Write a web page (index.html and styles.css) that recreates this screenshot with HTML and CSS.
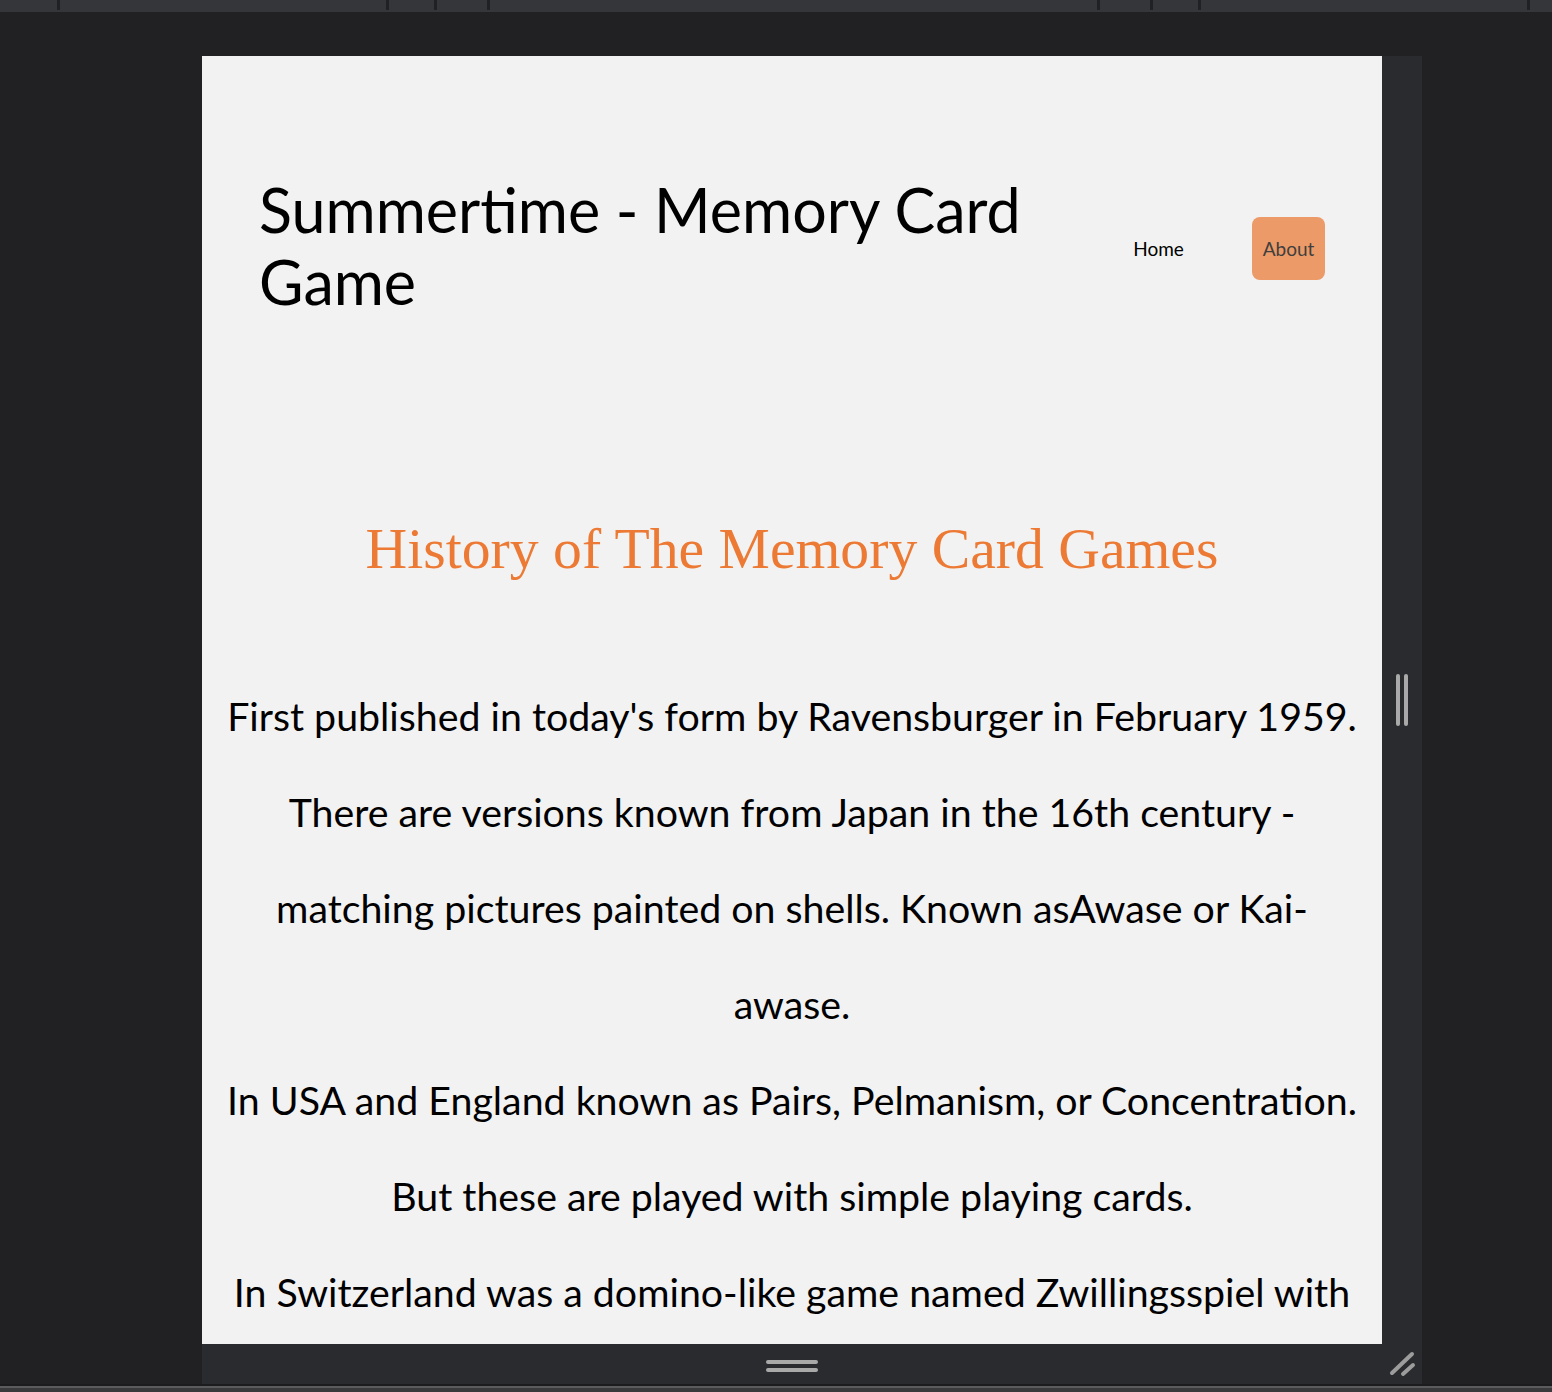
FILE: index.html
```html
<!DOCTYPE html>
<html lang="en">
<head>
<meta charset="utf-8">
<title>Summertime - Memory Card Game</title>
<link rel="stylesheet" href="styles.css">
</head>
<body>
<div class="topbar">
  <div class="tab tab-a"></div>
  <div class="tab tab-b sep"></div>
  <div class="tab tab-c sep"></div>
  <div class="tab tab-d sep"></div>
  <div class="tab tab-e sep"></div>
  <div class="tab tab-d sep"></div>
  <div class="tab tab-c sep"></div>
  <div class="tab tab-b sep"></div>
  <div class="tab tab-f sep"></div>
</div>
<div class="stage">
  <div class="frame">
    <div class="preview">
      <header class="site-header">
        <h1 class="site-title">Summertime - Memory Card Game</h1>
        <nav class="nav">
          <a class="nav-link" href="#">Home</a>
          <a class="nav-link nav-active" href="#">About</a>
        </nav>
      </header>
      <main class="content">
        <h2 class="history-title">History of The Memory Card Games</h2>
        <p class="text">First published in today's form by Ravensburger in February 1959.</p>
        <p class="text">There are versions known from Japan in the 16th century -<br>matching pictures painted on shells. Known asAwase or Kai-<br>awase.</p>
        <p class="text">In USA and England known as Pairs, Pelmanism, or Concentration.</p>
        <p class="text">But these are played with simple playing cards.</p>
        <p class="text">In Switzerland was a domino-like game named Zwillingsspiel with</p>
      </main>
    </div>
    <div class="side-handle">
      <span class="vbar"></span><span class="vbar"></span>
    </div>
    <div class="bottom-handle">
      <span class="hbar"></span><span class="hbar"></span>
    </div>
    <div class="corner">
      <svg width="40" height="40" viewBox="0 0 40 40">
        <path d="M10 29 L30 10 M21 30 L31 21" stroke="#9c9c9c" stroke-width="4" stroke-linecap="round" fill="none"/>
      </svg>
    </div>
  </div>
</div>
<div class="bottom-strip"></div>
</body>
</html>
```
FILE: styles.css
```css
html, body {
  margin: 0;
  padding: 0;
}
body {
  background: #212123;
  width: 1552px;
  height: 1392px;
  overflow: hidden;
}
.topbar {
  height: 12px;
  background: #35363a;
  display: flex;
}
.tab {
  height: 10px;
  box-sizing: border-box;
  flex: none;
}
.sep {
  border-left: 3px solid #202124;
}
.tab-a { width: 57px; }
.tab-b { width: 329px; }
.tab-c { width: 48px; }
.tab-d { width: 53px; }
.tab-e { width: 610px; }
.tab-f { width: 25px; }

.stage {
  height: 1372px;
  padding: 44px 0 0 202px;
  box-sizing: border-box;
}
.frame {
  width: 1220px;
  height: 1328px;
  display: grid;
  grid-template-columns: 1180px 40px;
  grid-template-rows: 1288px 40px;
  background: #2a2b2f;
}
.preview {
  background: #f2f2f2;
  overflow: hidden;
  color: #000;
  font-family: Lato, "Liberation Sans", sans-serif;
}
.site-header {
  display: flex;
  justify-content: space-between;
  align-items: center;
  padding: 118px 57px 0 57px;
}
.site-title {
  margin: 0;
  width: 800px;
  font-weight: 400;
  font-size: 61px;
  line-height: 72px;
}
.nav {
  display: flex;
  align-items: center;
  gap: 57px;
  margin-top: 5px;
}
.nav-link {
  display: block;
  width: 73px;
  height: 63px;
  box-sizing: border-box;
  border-radius: 8px;
  font-size: 19px;
  line-height: 63px;
  text-align: center;
  color: #000;
  text-decoration: none;
}
.nav-active {
  background: #ec9a67;
  color: #3f3f3f;
}
.content {
  padding: 198px 20px 0;
  text-align: center;
}
.history-title {
  margin: 0 0 86px;
  font-family: "Liberation Serif", serif;
  font-weight: 400;
  font-size: 57.7px;
  line-height: 66px;
  color: #ec7a34;
}
.text {
  margin: 0;
  font-size: 39.3px;
  line-height: 96px;
  white-space: nowrap;
}
.side-handle {
  display: flex;
  justify-content: center;
  align-items: center;
  gap: 4px;
}
.vbar {
  width: 4px;
  height: 52px;
  border-radius: 2px;
  background: #a9a9a9;
}
.bottom-handle {
  display: flex;
  flex-direction: column;
  align-items: center;
  justify-content: center;
  gap: 4px;
  padding-top: 4px;
  box-sizing: border-box;
}
.hbar {
  width: 52px;
  height: 4px;
  border-radius: 2px;
  background: #a9a9a9;
}
.corner {
  display: block;
}
.corner svg {
  display: block;
}
.bottom-strip {
  height: 8px;
  box-sizing: border-box;
  border-top: 2px solid #1c1c1e;
  border-bottom: 4px solid #3a3a3c;
  background: #5b5b5d;
}
```
